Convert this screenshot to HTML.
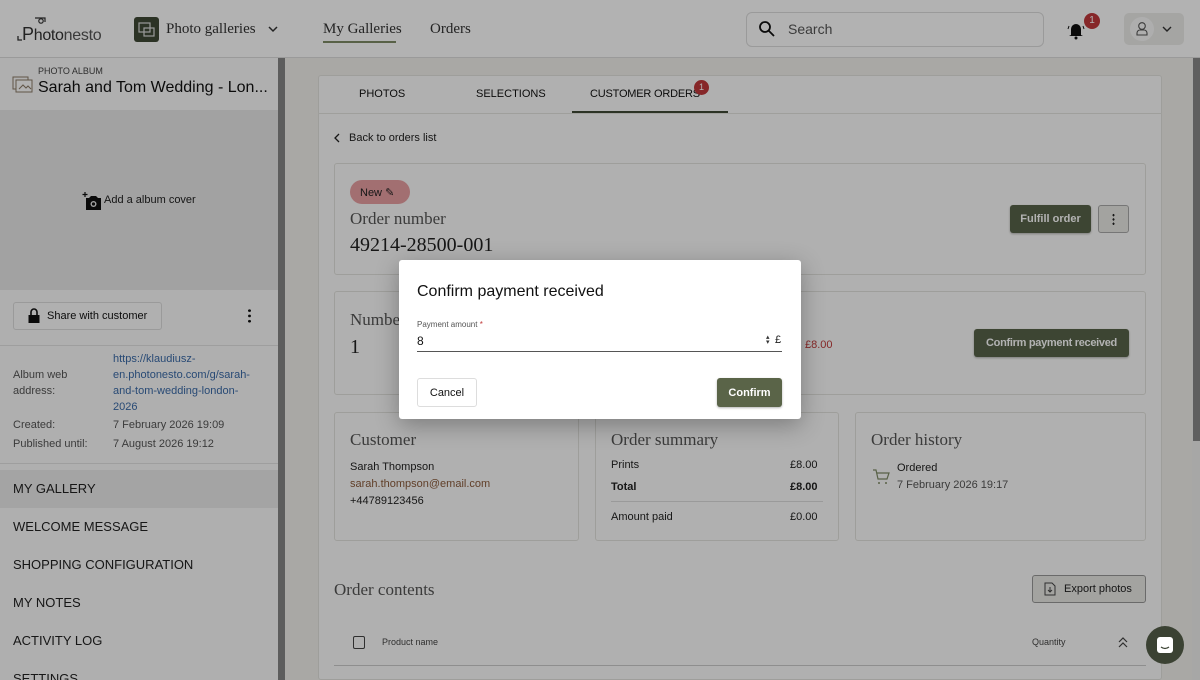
<!DOCTYPE html>
<html style="overflow:hidden;width:1200px;height:680px"><head><meta charset="utf-8"><style>
*{box-sizing:border-box;margin:0;padding:0}
body{width:1200px;height:680px;overflow:hidden;position:relative;font-family:"Liberation Sans",sans-serif;background:#f2f1ec;color:#222}
.abs{position:absolute}
.serif{font-family:"Liberation Serif",serif}
.hdr{left:0;top:0;width:1200px;height:58px;background:#fff;border-bottom:1px solid #ddd}
.side{left:0;top:58px;width:278px;height:622px;background:#fbfbfb;overflow:hidden}
.sb{left:278px;top:58px;width:7px;height:622px;background:#868686}
.card{background:#fdfdfc;border:1px solid #e2e2de;border-radius:3px}
.btn{background:#58634a;color:#fff;font-size:11px;font-weight:bold;border-radius:3px;display:flex;align-items:center;justify-content:center;box-shadow:0 1px 2px rgba(0,0,0,.3);white-space:nowrap}
.nav{left:0;width:278px;height:38px;font-size:13px;padding-left:13px;line-height:38px;color:#222}
.ov{left:0;top:0;width:1200px;height:680px;background:rgba(0,0,0,.3)}
</style></head><body>
<div class="abs hdr">
 <div class="abs" style="left:16px;top:16px;width:90px;height:28px">
  <svg width="90" height="28" viewBox="0 0 90 28"><circle cx="25" cy="5" r="2.2" fill="none" stroke="#333" stroke-width="1.2"/><path d="M19 2h10v4" fill="none" stroke="#333" stroke-width="1.2"/><path d="M2 20v4h4" fill="none" stroke="#333" stroke-width="1.3"/></svg>
  <span class="abs" style="left:6px;top:8px;font-size:18px;color:#333;letter-spacing:-.3px">P<span style="font-size:16px">hoto</span><span style="font-size:16px;color:#555">nesto</span></span>
 </div>
 <div class="abs" style="left:134px;top:17px;width:25px;height:25px;background:#3f4a35;border-radius:3px"><svg width="25" height="25"><rect x="5" y="6" width="11" height="9" fill="none" stroke="#ddd" stroke-width="1.2"/><rect x="10" y="11" width="10" height="8" fill="none" stroke="#ddd" stroke-width="1.2"/></svg></div>
 <div class="abs serif" style="left:166px;top:21px;font-size:15px;color:#333">Photo galleries</div>
 <svg class="abs" style="left:267px;top:24px" width="12" height="10"><path d="M2 3l4 4 4-4" fill="none" stroke="#333" stroke-width="1.5"/></svg>
 <div class="abs serif" style="left:323px;top:21px;font-size:15px;color:#333">My Galleries</div>
 <div class="abs" style="left:323px;top:41px;width:73px;height:2px;background:#7f8c66"></div>
 <div class="abs serif" style="left:430px;top:21px;font-size:15px;color:#333">Orders</div>
 <div class="abs" style="left:746px;top:12px;width:298px;height:35px;border:1px solid #ddd;border-radius:6px"></div>
 <svg class="abs" style="left:758px;top:20px" width="18" height="18"><circle cx="7" cy="7" r="5" fill="none" stroke="#111" stroke-width="1.8"/><path d="M11 11l5 5" stroke="#111" stroke-width="1.8"/></svg>
 <div class="abs" style="left:788px;top:21px;font-size:14px;color:#555">Search</div>
 <svg class="abs" style="left:1067px;top:20px" width="18" height="20"><path d="M4 15V9a5 5 0 0 1 10 0v6l2 1H2z" fill="#111"/><circle cx="9" cy="18" r="1.5" fill="#111"/><path d="M2 6l-1 3M16 6l1 3" stroke="#111"/></svg>
 <div class="abs" style="left:1084px;top:13px;width:16px;height:16px;border-radius:50%;background:#c0393b;color:#fff;font-size:10px;text-align:center;line-height:16px">1</div>
 <div class="abs" style="left:1124px;top:13px;width:60px;height:32px;background:#ececea;border-radius:5px"></div>
 <div class="abs" style="left:1130px;top:17px;width:24px;height:24px;border-radius:50%;background:#fafafa"><svg width="24" height="24"><circle cx="12" cy="9" r="3.3" fill="none" stroke="#555" stroke-width="1.1"/><path d="M7 18v-2a3 3 0 0 1 3-3h4a3 3 0 0 1 3 3v2z" fill="none" stroke="#555" stroke-width="1.1"/></svg></div>
 <svg class="abs" style="left:1161px;top:25px" width="12" height="9"><path d="M2 2l4 4 4-4" fill="none" stroke="#333" stroke-width="1.4"/></svg>
</div>
<div class="abs side">
 <svg class="abs" style="left:12px;top:18px" width="22" height="18"><rect x="1" y="1" width="15" height="12" fill="none" stroke="#8a7a66"/><rect x="4" y="4" width="16" height="12" fill="#fff" stroke="#8a7a66"/><path d="M7 13l4-4 3 3 2-2 3 3" fill="none" stroke="#8a7a66"/></svg>
 <div class="abs" style="left:38px;top:8px;font-size:9px;color:#444">PHOTO ALBUM</div>
 <div class="abs" style="left:38px;top:21px;font-size:16px;color:#111;white-space:nowrap">Sarah and Tom Wedding - Lon...</div>
 <div class="abs" style="left:0;top:52px;width:278px;height:180px;background:#e8e8e8"></div>
 <svg class="abs" style="left:82px;top:134px" width="20" height="18"><path d="M3 0v5M0.5 2.5h5" stroke="#111" stroke-width="1.2"/><path d="M4 6h3l2-2h5l2 2h3v12H4z" fill="#111"/><circle cx="11.5" cy="12" r="3" fill="#e8e8e8"/><circle cx="11.5" cy="12" r="1.6" fill="#111"/></svg>
 <div class="abs" style="left:104px;top:136px;font-size:11px;color:#222">Add a album cover</div>
 <div class="abs" style="left:13px;top:244px;width:149px;height:28px;border:1px solid #ddd;border-radius:3px;background:#fcfcfc"></div>
 <svg class="abs" style="left:27px;top:249px" width="14" height="17"><path d="M4 8V5a3 3 0 0 1 6 0v3" fill="none" stroke="#111" stroke-width="1.6"/><rect x="1.5" y="8" width="11" height="8" fill="#111"/></svg>
 <div class="abs" style="left:47px;top:252px;font-size:11px;color:#111">Share with customer</div>
 <div class="abs" style="left:248px;top:250px;width:3px;height:16px;background:radial-gradient(circle,#111 1.3px,transparent 1.5px) 0 0/3px 5.3px"></div>
 <div class="abs" style="left:0;top:287px;width:278px;height:1px;background:#e2e2e2"></div>
 <div class="abs" style="left:13px;top:309px;font-size:11px;color:#555;line-height:16px">Album web<br>address:</div>
 <div class="abs" style="left:113px;top:293px;font-size:11px;color:#3a6aa8;line-height:16px">https://klaudiusz-<br>en.photonesto.com/g/sarah-<br>and-tom-wedding-london-<br>2026</div>
 <div class="abs" style="left:13px;top:361px;font-size:11px;color:#555">Created:</div>
 <div class="abs" style="left:113px;top:361px;font-size:11px;color:#555">7 February 2026 19:09</div>
 <div class="abs" style="left:13px;top:380px;font-size:11px;color:#555">Published until:</div>
 <div class="abs" style="left:113px;top:380px;font-size:11px;color:#555">7 August 2026 19:12</div>
 <div class="abs" style="left:0;top:405px;width:278px;height:1px;background:#e2e2e2"></div>
 <div class="abs nav" style="top:412px;background:#ebebeb">MY GALLERY</div>
 <div class="abs nav" style="top:450px">WELCOME MESSAGE</div>
 <div class="abs nav" style="top:488px">SHOPPING CONFIGURATION</div>
 <div class="abs nav" style="top:526px">MY NOTES</div>
 <div class="abs nav" style="top:564px">ACTIVITY LOG</div>
 <div class="abs nav" style="top:602px">SETTINGS</div>
</div>
<div class="abs sb"></div>
<div class="abs" style="left:1192px;top:58px;width:8px;height:622px;background:#f0f0ee"></div>
<div class="abs" style="left:1193px;top:58px;width:7px;height:383px;background:#888"></div>
<!-- main -->
<div class="abs card" style="left:318px;top:75px;width:844px;height:605px"></div>
<div class="abs" style="left:318px;top:113px;width:844px;height:1px;background:#e4e4e0"></div>
<div class="abs" style="left:359px;top:88px;font-size:11px;color:#111">PHOTOS</div>
<div class="abs" style="left:476px;top:88px;font-size:11px;color:#111">SELECTIONS</div>
<div class="abs" style="left:590px;top:88px;font-size:11px;color:#111;letter-spacing:-.2px">CUSTOMER ORDERS</div>
<div class="abs" style="left:694px;top:80px;width:15px;height:15px;border-radius:50%;background:#c0393b;color:#fff;font-size:9px;text-align:center;line-height:15px">1</div>
<div class="abs" style="left:572px;top:111px;width:156px;height:2px;background:#3f4a35"></div>
<svg class="abs" style="left:333px;top:133px" width="8" height="10"><path d="M6 1L2 5l4 4" fill="none" stroke="#222" stroke-width="1.3"/></svg>
<div class="abs" style="left:349px;top:132px;font-size:11px;color:#222">Back to orders list</div>
<div class="abs card" style="left:334px;top:163px;width:812px;height:112px"></div>
<div class="abs" style="left:350px;top:180px;width:60px;height:24px;border-radius:12px;background:#e89fa2;font-size:11px;color:#222;padding:6px 10px">New <span style="font-size:11px">✎</span></div>
<div class="abs serif" style="left:350px;top:209px;font-size:17px;color:#555">Order number</div>
<div class="abs serif" style="left:350px;top:234px;font-size:20px;color:#222">49214-28500-001</div>
<div class="abs btn" style="left:1010px;top:205px;width:81px;height:28px">Fulfill order</div>
<div class="abs" style="left:1098px;top:205px;width:31px;height:28px;border:1px solid #aaa;border-radius:3px;background:#eaeae6"></div>
<div class="abs" style="left:1112px;top:213px;width:3px;height:13px;background:radial-gradient(circle,#222 1px,transparent 1.2px) 0 0/3px 4.3px"></div>
<div class="abs card" style="left:334px;top:291px;width:812px;height:104px"></div>
<div class="abs serif" style="left:350px;top:310px;font-size:17px;color:#555">Number</div>
<div class="abs serif" style="left:350px;top:336px;font-size:20px;color:#222">1</div>
<div class="abs" style="left:805px;top:339px;font-size:11px;color:#c03a3a">£8.00</div>
<div class="abs btn" style="left:974px;top:329px;width:155px;height:28px;letter-spacing:-.3px">Confirm payment received</div>
<div class="abs card" style="left:334px;top:412px;width:245px;height:129px"></div>
<div class="abs card" style="left:595px;top:412px;width:244px;height:129px"></div>
<div class="abs card" style="left:855px;top:412px;width:291px;height:129px"></div>
<div class="abs serif" style="left:350px;top:430px;font-size:17px;color:#555">Customer</div>
<div class="abs" style="left:350px;top:459px;font-size:11px;color:#222;line-height:17px">Sarah Thompson<br><span style="color:#8a5a3a">sarah.thompson@email.com</span><br>+44789123456</div>
<div class="abs serif" style="left:611px;top:430px;font-size:17px;color:#555">Order summary</div>
<div class="abs" style="left:611px;top:459px;font-size:11px;color:#222">Prints</div><div class="abs" style="left:790px;top:459px;font-size:11px">£8.00</div>
<div class="abs" style="left:611px;top:481px;font-size:11px;font-weight:bold">Total</div><div class="abs" style="left:790px;top:481px;font-size:11px;font-weight:bold">£8.00</div>
<div class="abs" style="left:611px;top:501px;width:212px;height:1px;background:#ddd"></div>
<div class="abs" style="left:611px;top:511px;font-size:11px;color:#222">Amount paid</div><div class="abs" style="left:790px;top:511px;font-size:11px">£0.00</div>
<div class="abs serif" style="left:871px;top:430px;font-size:17px;color:#555">Order history</div>
<svg class="abs" style="left:872px;top:468px" width="18" height="18"><path d="M1 2h3l2 9h9l2-6H5" fill="none" stroke="#7f8c66" stroke-width="1.2"/><circle cx="7" cy="15" r="1" fill="#7f8c66"/><circle cx="14" cy="15" r="1" fill="#7f8c66"/></svg>
<div class="abs" style="left:897px;top:462px;font-size:11px;color:#222">Ordered</div>
<div class="abs" style="left:897px;top:479px;font-size:11px;color:#555">7 February 2026 19:17</div>
<div class="abs serif" style="left:334px;top:580px;font-size:17px;color:#555">Order contents</div>
<div class="abs" style="left:1032px;top:575px;width:114px;height:28px;border:1px solid #999;border-radius:3px;background:#eaeae6"></div>
<svg class="abs" style="left:1044px;top:582px" width="12" height="14"><path d="M1 1h7l3 3v9H1z" fill="none" stroke="#444"/><path d="M6 5v5M4 8l2 2 2-2" fill="none" stroke="#444"/></svg>
<div class="abs" style="left:1064px;top:583px;font-size:11px;color:#222">Export photos</div>
<div class="abs" style="left:353px;top:636px;width:12px;height:13px;border:1.5px solid #444;border-radius:2px"></div>
<div class="abs" style="left:382px;top:637px;font-size:9px;color:#444">Product name</div>
<div class="abs" style="left:1032px;top:637px;font-size:9px;color:#444">Quantity</div>
<svg class="abs" style="left:1118px;top:637px" width="10" height="12"><path d="M1 5l4-4 4 4M1 10l4-4 4 4" fill="none" stroke="#444" stroke-width="1.2"/></svg>
<div class="abs" style="left:334px;top:665px;width:812px;height:1px;background:#ccc"></div>
<div class="abs ov"></div>
<div class="abs" style="left:1146px;top:626px;width:38px;height:38px;border-radius:50%;background:#3b4233"><div class="abs" style="left:11px;top:11px;width:16px;height:16px;background:#fff;border-radius:3px"></div><svg class="abs" style="left:11px;top:11px" width="16" height="16"><path d="M4 10q4 3 8 0" fill="none" stroke="#3b4233" stroke-width="1.2"/></svg></div>
<!-- modal -->
<div class="abs" style="left:399px;top:260px;width:402px;height:159px;background:#fff;border-radius:3px;box-shadow:0 6px 24px rgba(0,0,0,.3)">
 <div class="abs" style="left:18px;top:23px;font-size:16px;color:#111">Confirm payment received</div>
 <div class="abs" style="left:18px;top:60px;font-size:8px;color:#555">Payment amount <span style="color:#c03a3a">*</span></div>
 <div class="abs" style="left:18px;top:74px;font-size:12px;color:#111">8</div>
 <div class="abs" style="left:367px;top:75px;font-size:7px;line-height:5px;color:#333">▴<br>▾</div>
 <div class="abs" style="left:376px;top:74px;font-size:11px;color:#222">£</div>
 <div class="abs" style="left:18px;top:91px;width:365px;height:1px;background:#555"></div>
 <div class="abs" style="left:18px;top:118px;width:60px;height:29px;border:1px solid #ddd;border-radius:3px;font-size:11px;display:flex;align-items:center;justify-content:center;color:#111">Cancel</div>
 <div class="abs btn" style="left:318px;top:118px;width:65px;height:29px;background:#5a6448">Confirm</div>
</div>
</body></html>
